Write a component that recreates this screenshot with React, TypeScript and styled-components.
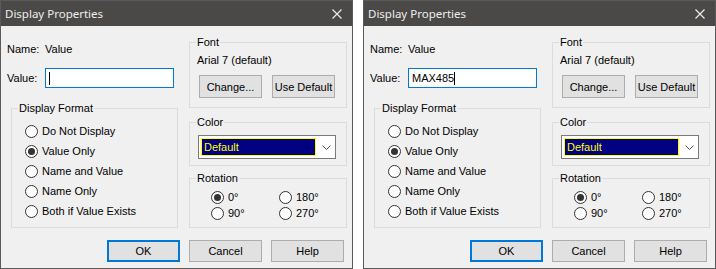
import React from "react";
import styled, { createGlobalStyle } from "styled-components";

const GlobalStyle = createGlobalStyle`
  html, body { margin: 0; padding: 0; background: #ffffff; }
  body {
    font-family: "Liberation Sans", Arial, sans-serif;
    font-size: 11px;
    color: #000;
  }
  * { box-sizing: border-box; }
`;

const Screen = styled.div`
  display: flex;
  gap: 10px;
  width: 716px;
  height: 269px;
`;

const Dialog = styled.div`
  width: 353px;
  height: 269px;
  border: 1px solid #5a5a5a;
  background: #f0f0f0;
  display: flex;
  flex-direction: column;
`;

const TitleBar = styled.div`
  flex: none;
  height: 25px;
  background: #4a4947;
  display: flex;
  align-items: center;
  justify-content: space-between;
  padding: 0 10px 0 4px;
`;

const Title = styled.span`
  font-family: "Noto Sans", "Open Sans", sans-serif;
  font-size: 11.5px;
  color: #eeeeee;
  line-height: 16px;
`;

const Body = styled.div`
  flex: 1;
  display: flex;
  flex-direction: column;
  padding: 13px 5px 6px 6px;
`;

const Columns = styled.div`
  display: flex;
  gap: 11px;
`;

const LeftCol = styled.div`
  width: 171px;
  display: flex;
  flex-direction: column;
`;

const RightCol = styled.div`
  width: 158px;
  display: flex;
  flex-direction: column;
  padding-top: 3px;
`;

const Row = styled.div<{ $mt?: number }>`
  height: 20px;
  display: flex;
  align-items: center;
  margin-top: ${(p) => p.$mt ?? 0}px;
`;

const FieldLabel = styled.span`
  width: 38px;
  flex: none;
`;

const TextBox = styled.div`
  width: 129px;
  height: 20px;
  border: 1px solid #0078d7;
  background: #fff;
  display: flex;
  align-items: center;
  padding-left: 3px;
  line-height: 13px;
`;

const Caret = styled.span`
  display: inline-block;
  width: 1px;
  height: 13px;
  background: #000;
`;

const GroupBox = styled.div<{ $h: number; $mt?: number; $ml?: number; $w?: number }>`
  border: 1px solid #dcdcdc;
  display: flex;
  flex-direction: column;
  height: ${(p) => p.$h}px;
  margin-top: ${(p) => p.$mt ?? 0}px;
  margin-left: ${(p) => p.$ml ?? 0}px;
  width: ${(p) => (p.$w ? `${p.$w}px` : "auto")};
`;

const Legend = styled.span`
  align-self: flex-start;
  margin: -7px 0 0 6px;
  padding: 0 1px;
  background: #f0f0f0;
  height: 13px;
  line-height: 13px;
`;

const RadioList = styled.div`
  display: flex;
  flex-direction: column;
  padding: 6px 0 0 13px;
`;

const RadioRow = styled.div<{ $h: number }>`
  height: ${(p) => p.$h}px;
  display: flex;
  align-items: center;
  gap: 4px;
`;

const RadioCircle = styled.span`
  width: 13px;
  height: 13px;
  flex: none;
  border: 1px solid #333333;
  border-radius: 50%;
  background: #fff;
  display: flex;
  align-items: center;
  justify-content: center;
`;

const RadioDot = styled.span`
  width: 7px;
  height: 7px;
  border-radius: 50%;
  background: #333333;
`;

const RotationGrid = styled.div`
  display: grid;
  grid-template-columns: 68px auto;
  padding: 4px 0 0 21px;
`;

const FontName = styled.div`
  margin: 4px 0 0 7px;
  line-height: 14px;
`;

const ButtonPair = styled.div`
  display: flex;
  gap: 10px;
  margin-top: 8px;
  padding-left: 9px;
`;

const Button = styled.button<{ $w: number; $h: number; $default?: boolean }>`
  width: ${(p) => p.$w}px;
  height: ${(p) => p.$h}px;
  padding: 0;
  background: #e1e1e1;
  border: ${(p) => (p.$default ? "2px solid #0078d7" : "1px solid #adadad")};
  font-family: "Liberation Sans", Arial, sans-serif;
  font-size: 11px;
  color: #000;
  display: flex;
  align-items: center;
  justify-content: center;
`;

const Combo = styled.div`
  width: 138px;
  height: 24px;
  margin: 6px 0 0 8px;
  border: 1px solid #7a7a7a;
  background: #fff;
  padding: 2px;
  display: flex;
`;

const ComboValue = styled.div`
  width: 115px;
  background: #000080;
  border: 1px solid #ffff00;
  color: #ffff00;
  padding-left: 2px;
  display: flex;
  align-items: center;
`;

const ComboArrow = styled.div`
  flex: 1;
  display: flex;
  align-items: center;
  justify-content: center;
  padding-left: 3px;
`;

const ButtonRow = styled.div`
  display: flex;
  justify-content: flex-end;
  gap: 9px;
  margin: 12px 3px 0 0;
`;

function Radio({ label, checked, h }: { label: string; checked?: boolean; h: number }) {
  return (
    <RadioRow $h={h}>
      <RadioCircle>{checked && <RadioDot />}</RadioCircle>
      <span>{label}</span>
    </RadioRow>
  );
}

const formats = ["Do Not Display", "Value Only", "Name and Value", "Name Only", "Both if Value Exists"];
const rotations = ["0°", "180°", "90°", "270°"];

function DisplayProperties({ value }: { value: string }) {
  return (
    <Dialog>
      <TitleBar>
        <Title>Display Properties</Title>
        <svg width="10" height="10" viewBox="0 0 10 10">
          <path d="M0.5 0.5 L9.5 9.5 M9.5 0.5 L0.5 9.5" stroke="#f0f0f0" strokeWidth="1.1" fill="none" />
        </svg>
      </TitleBar>
      <Body>
        <Columns>
          <LeftCol>
            <Row>
              <FieldLabel>Name:</FieldLabel>
              <span>Value</span>
            </Row>
            <Row $mt={9}>
              <FieldLabel>Value:</FieldLabel>
              <TextBox>
                <span>{value}</span>
                <Caret />
              </TextBox>
            </Row>
            <GroupBox $h={120} $mt={20} $ml={4} $w={167}>
              <Legend>Display Format</Legend>
              <RadioList>
                {formats.map((f) => (
                  <Radio key={f} label={f} h={20} checked={f === "Value Only"} />
                ))}
              </RadioList>
            </GroupBox>
          </LeftCol>
          <RightCol>
            <GroupBox $h={66}>
              <Legend>Font</Legend>
              <FontName>Arial 7 (default)</FontName>
              <ButtonPair>
                <Button $w={63} $h={23}>Change...</Button>
                <Button $w={63} $h={23}>Use Default</Button>
              </ButtonPair>
            </GroupBox>
            <GroupBox $h={44} $mt={14}>
              <Legend>Color</Legend>
              <Combo>
                <ComboValue>Default</ComboValue>
                <ComboArrow>
                  <svg width="9" height="5" viewBox="0 0 9 5">
                    <path d="M0.5 0.5 L4.5 4.5 L8.5 0.5" stroke="#555" strokeWidth="1" fill="none" />
                  </svg>
                </ComboArrow>
              </Combo>
            </GroupBox>
            <GroupBox $h={50} $mt={12}>
              <Legend>Rotation</Legend>
              <RotationGrid>
                {rotations.map((r) => (
                  <Radio key={r} label={r} h={16} checked={r === "0°"} />
                ))}
              </RotationGrid>
            </GroupBox>
          </RightCol>
        </Columns>
        <ButtonRow>
          <Button $w={73} $h={22} $default>OK</Button>
          <Button $w={73} $h={22}>Cancel</Button>
          <Button $w={73} $h={22}>Help</Button>
        </ButtonRow>
      </Body>
    </Dialog>
  );
}

export default function App() {
  return (
    <>
      <GlobalStyle />
      <Screen>
        <DisplayProperties value="" />
        <DisplayProperties value="MAX485" />
      </Screen>
    </>
  );
}
